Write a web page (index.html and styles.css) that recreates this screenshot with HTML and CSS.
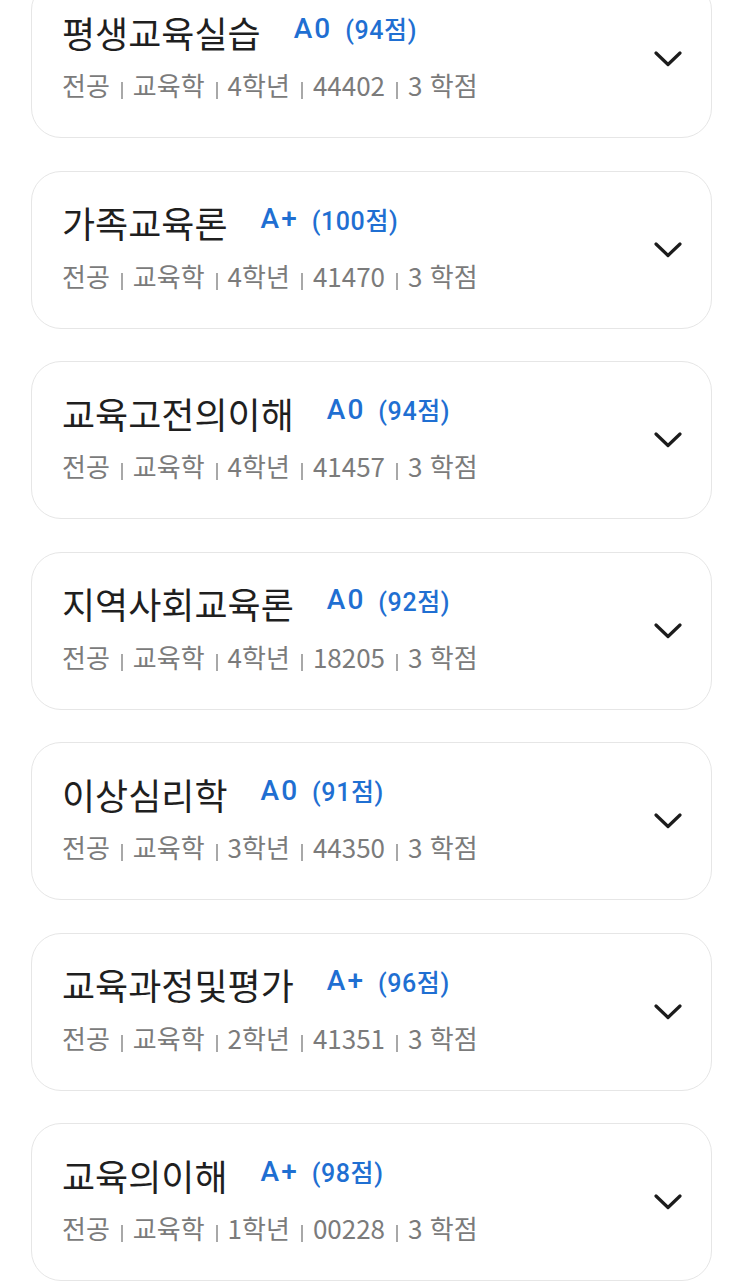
FILE: index.html
```html
<!DOCTYPE html>
<html lang="ko">
<head>
    <meta charset="UTF-8">
    <meta name="viewport" content="width=device-width, initial-scale=1.0">
    <title>성적 조회</title>
    <link rel="stylesheet" href="styles.css">
</head>
<body>
    <section class="course_list">
        <div class="course_card">
            <div class="course_info">
                <div class="course_title">평생교육실습<span class="grade">A0</span><span class="score">(94점)</span></div>
                <div class="course_meta">전공<i></i>교육학<i></i>4학년<i></i>44402<i></i>3 학점</div>
            </div>
            <svg class="chevron" viewBox="0 0 28 16"><path d="M2 2 L14 13.5 L26 2"/></svg>
        </div>
        <div class="course_card">
            <div class="course_info">
                <div class="course_title">가족교육론<span class="grade">A+</span><span class="score">(100점)</span></div>
                <div class="course_meta">전공<i></i>교육학<i></i>4학년<i></i>41470<i></i>3 학점</div>
            </div>
            <svg class="chevron" viewBox="0 0 28 16"><path d="M2 2 L14 13.5 L26 2"/></svg>
        </div>
        <div class="course_card">
            <div class="course_info">
                <div class="course_title">교육고전의이해<span class="grade">A0</span><span class="score">(94점)</span></div>
                <div class="course_meta">전공<i></i>교육학<i></i>4학년<i></i>41457<i></i>3 학점</div>
            </div>
            <svg class="chevron" viewBox="0 0 28 16"><path d="M2 2 L14 13.5 L26 2"/></svg>
        </div>
        <div class="course_card">
            <div class="course_info">
                <div class="course_title">지역사회교육론<span class="grade">A0</span><span class="score">(92점)</span></div>
                <div class="course_meta">전공<i></i>교육학<i></i>4학년<i></i>18205<i></i>3 학점</div>
            </div>
            <svg class="chevron" viewBox="0 0 28 16"><path d="M2 2 L14 13.5 L26 2"/></svg>
        </div>
        <div class="course_card">
            <div class="course_info">
                <div class="course_title">이상심리학<span class="grade">A0</span><span class="score">(91점)</span></div>
                <div class="course_meta">전공<i></i>교육학<i></i>3학년<i></i>44350<i></i>3 학점</div>
            </div>
            <svg class="chevron" viewBox="0 0 28 16"><path d="M2 2 L14 13.5 L26 2"/></svg>
        </div>
        <div class="course_card">
            <div class="course_info">
                <div class="course_title">교육과정및평가<span class="grade">A+</span><span class="score">(96점)</span></div>
                <div class="course_meta">전공<i></i>교육학<i></i>2학년<i></i>41351<i></i>3 학점</div>
            </div>
            <svg class="chevron" viewBox="0 0 28 16"><path d="M2 2 L14 13.5 L26 2"/></svg>
        </div>
        <div class="course_card">
            <div class="course_info">
                <div class="course_title">교육의이해<span class="grade">A+</span><span class="score">(98점)</span></div>
                <div class="course_meta">전공<i></i>교육학<i></i>1학년<i></i>00228<i></i>3 학점</div>
            </div>
            <svg class="chevron" viewBox="0 0 28 16"><path d="M2 2 L14 13.5 L26 2"/></svg>
        </div>
    </section>
</body>
</html>
```

FILE: styles.css
```css
body {
    margin: 0;
    background: #fff;
    font-family: 'Noto Sans CJK KR', 'Noto Sans', sans-serif;
    color: #222;
    overflow: hidden;
}

/* list is scrolled a bit, first card is cut at the top */
.course_list {
    display: flex;
    flex-direction: column;
    gap: 32.5px;
    margin-top: -20px;
    padding: 0 31px;
}

.course_card {
    box-sizing: border-box;
    height: 158px;
    border: 1.5px solid #e6e6e6;
    border-radius: 30px;
    background: #fff;
    display: flex;
    align-items: center;
    justify-content: space-between;
    padding: 0 29px 0 30px;
}

.course_info {
    display: flex;
    flex-direction: column;
    padding-bottom: 6.5px;
}

.course_title {
    font-size: 36px;
    line-height: 44px;
    color: #1f1f1f;
    display: flex;
    align-items: center;
    white-space: nowrap;
}

/* grade letter + score in blue */
.grade {
    margin-left: 33px;
    color: #1f6fd2;
    font-family: Roboto, 'Noto Sans CJK KR', sans-serif;
    font-weight: 500;
    font-size: 28px;
    line-height: 32px;
    letter-spacing: 2px;
    margin-top: -6px;
}

.score {
    margin-left: 13px;
    color: #1f6fd2;
    font-family: Roboto, 'Noto Sans CJK KR', sans-serif;
    font-size: 25px;
    line-height: 32px;
    font-weight: 500;
    letter-spacing: 0.6px;
    margin-top: -1px;
}

.course_meta {
    margin-top: 14.5px;
    font-size: 26px;
    line-height: 34px;
    color: #7b7b7b;
    white-space: nowrap;
}

/* short light divider between meta items */
.course_meta i {
    display: inline-block;
    width: 2px;
    height: 17px;
    background: #a8a8a8;
    margin: 0 10px 0 11px;
    vertical-align: -3px;
}

.chevron {
    width: 28px;
    height: 16px;
    fill: none;
    stroke: #1c1c1c;
    stroke-width: 3.2;
    stroke-linecap: round;
    stroke-linejoin: round;
}
```
